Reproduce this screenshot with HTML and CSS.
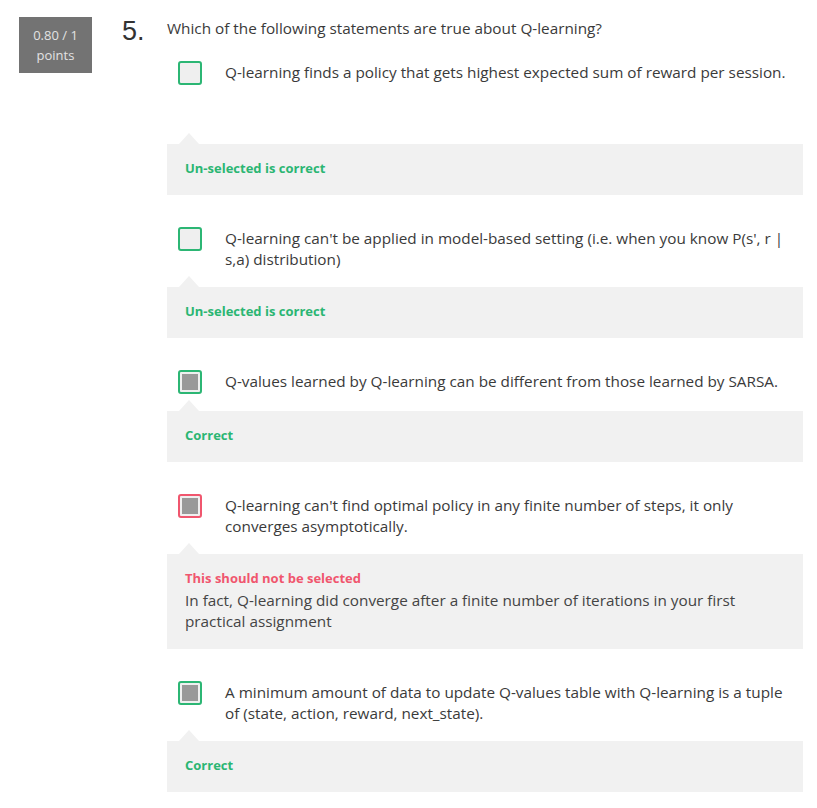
FILE: index.html
```html
<!DOCTYPE html>
<html lang="en">
<head>
<meta charset="utf-8">
<title>Quiz question 5</title>
<link rel="stylesheet" href="styles.css">
</head>
<body>
<div class="page">
  <div class="score">0.80 / 1<br>points</div>
  <div class="qnum">5.</div>
  <div class="qbody">
    <div class="qtext">Which of the following statements are true about Q-learning?</div>

    <div class="option option--first">
      <span class="box box--ok"></span>
      <div class="otext">Q-learning finds a policy that gets highest expected sum of reward per session.</div>
    </div>
    <div class="panel panel--tall">
      <div class="label label--ok">Un-selected is correct</div>
    </div>

    <div class="option">
      <span class="box box--ok"></span>
      <div class="otext">Q-learning can't be applied in model-based setting (i.e. when you know P(s', r | s,a) distribution)</div>
    </div>
    <div class="panel">
      <div class="label label--ok">Un-selected is correct</div>
    </div>

    <div class="option">
      <span class="box box--ok box--checked"></span>
      <div class="otext">Q-values learned by Q-learning can be different from those learned by SARSA.</div>
    </div>
    <div class="panel">
      <div class="label label--ok">Correct</div>
    </div>

    <div class="option">
      <span class="box box--bad box--checked"></span>
      <div class="otext">Q-learning can't find optimal policy in any finite number of steps, it only converges asymptotically.</div>
    </div>
    <div class="panel">
      <div class="label label--bad">This should not be selected</div>
      <div class="expl">In fact, Q-learning did converge after a finite number of iterations in your first practical assignment</div>
    </div>

    <div class="option">
      <span class="box box--ok box--checked"></span>
      <div class="otext">A minimum amount of data to update Q-values table with Q-learning is a tuple of (state, action, reward, next_state).</div>
    </div>
    <div class="panel">
      <div class="label label--ok">Correct</div>
    </div>
  </div>
</div>
</body>
</html>
```
FILE: styles.css
```css
html, body {
  margin: 0;
  padding: 0;
  background: #ffffff;
}

body {
  font-family: "Open Sans", "Liberation Sans", sans-serif;
  color: #3a3a3a;
}

.page {
  display: flex;
  align-items: flex-start;
  padding: 17px 14px 0 19px;
}

.score {
  width: 73px;
  height: 56px;
  box-sizing: border-box;
  padding-top: 8px;
  background: #737373;
  color: #e2e2e2;
  font-size: 13px;
  line-height: 20px;
  text-align: center;
}

.qnum {
  width: 45px;
  margin-left: 30px;
  margin-top: 1px;
  font-family: "Liberation Sans", Arial, sans-serif;
  font-size: 27px;
  line-height: 27px;
  color: #333333;
}

.qbody {
  flex: 1;
  min-width: 0;
}

.qtext {
  font-size: 15.3px;
  line-height: 22px;
}

.option {
  display: flex;
  align-items: flex-start;
  margin-top: 32px;
  padding-right: 8px;
}

.option--first {
  margin-top: 22px;
}

.box {
  flex: none;
  width: 24px;
  height: 24px;
  box-sizing: border-box;
  margin-left: 11px;
  border: 2px solid #2cb674;
  border-radius: 3px;
  background: #efefef;
  padding: 2px;
}

.box--bad {
  border-color: #f0566e;
}

.box--checked::after {
  content: "";
  display: block;
  width: 16px;
  height: 16px;
  background: #999999;
}

.otext {
  margin-left: 23px;
  padding-top: 1px;
  font-size: 15.3px;
  line-height: 21px;
}

.panel {
  position: relative;
  margin-top: 17px;
  padding: 13px 18px 16px;
  background: #f1f1f1;
}

.panel--tall {
  margin-top: 59px;
}

.panel::before {
  content: "";
  position: absolute;
  left: 12px;
  top: -11px;
  border-left: 10px solid transparent;
  border-right: 10px solid transparent;
  border-bottom: 11px solid #f1f1f1;
}

.label {
  font-size: 13px;
  font-weight: 700;
  line-height: 22px;
}

.label--ok {
  color: #2bb673;
}

.label--bad {
  color: #f0566e;
}

.expl {
  margin-top: 1px;
  margin-bottom: 1px;
  font-size: 15.3px;
  line-height: 21px;
  color: #444444;
}
```
